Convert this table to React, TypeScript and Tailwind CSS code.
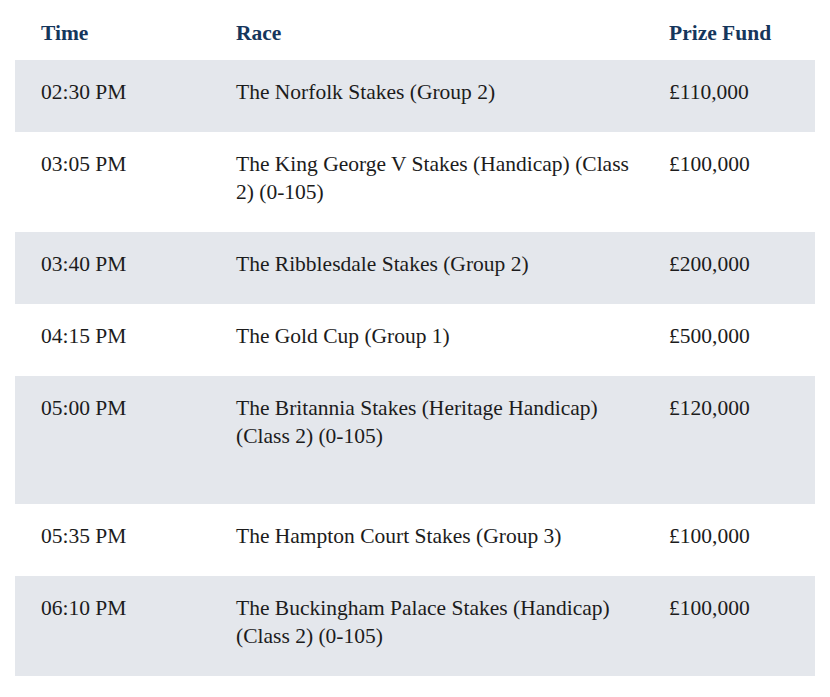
import React from "react";

const rows: { time: string; race: string; prize: string; h?: string }[] = [
  { time: "02:30 PM", race: "The Norfolk Stakes (Group 2)", prize: "£110,000" },
  { time: "03:05 PM", race: "The King George V Stakes (Handicap) (Class 2) (0-105)", prize: "£100,000" },
  { time: "03:40 PM", race: "The Ribblesdale Stakes (Group 2)", prize: "£200,000" },
  { time: "04:15 PM", race: "The Gold Cup (Group 1)", prize: "£500,000" },
  { time: "05:00 PM", race: "The Britannia Stakes (Heritage Handicap) (Class 2) (0-105)", prize: "£120,000", h: "tall" },
  { time: "05:35 PM", race: "The Hampton Court Stakes (Group 3)", prize: "£100,000" },
  { time: "06:10 PM", race: "The Buckingham Palace Stakes (Handicap) (Class 2) (0-105)", prize: "£100,000" },
];

export default function App() {
  return (
    <div
      className="w-[830px] h-[697px] bg-white px-[15px]"
      style={{ fontFamily: '"Liberation Serif", serif' }}
    >
      <div className="grid grid-cols-[195px_433px_172px] text-[21.5px] leading-[28px] font-bold text-[#15365c] h-[60px]">
        <div className="pl-[26px] pt-[19px]">Time</div>
        <div className="pl-[26px] pt-[19px]">Race</div>
        <div className="pl-[26px] pt-[19px]">Prize Fund</div>
      </div>
      {rows.map((r, i) => (
        <div
          key={i}
          className={
            "grid grid-cols-[195px_433px_172px] text-[21.5px] leading-[28px] text-[#1c1c1c] " +
            (i % 2 === 0 ? "bg-[#e4e7ec] " : "bg-white ") +
            (r.h === "tall" ? "h-[128px]" : "")
          }
        >
          <div className="pl-[26px] pt-[18px] pb-[26px]">{r.time}</div>
          <div className="pl-[26px] pr-[4px] pt-[18px] pb-[26px]">{r.race}</div>
          <div className="pl-[26px] pt-[18px] pb-[26px]">{r.prize}</div>
        </div>
      ))}
    </div>
  );
}
